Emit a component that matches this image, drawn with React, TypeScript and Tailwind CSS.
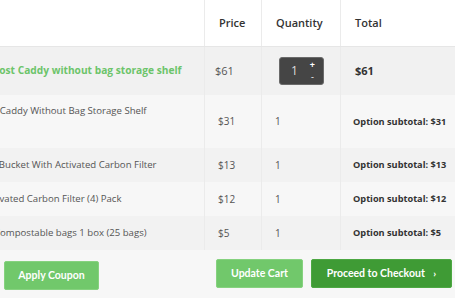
import { ReactNode } from "react";

type Option = {
  name: string;
  offset: string;
  price: string;
  qty: string;
  subtotal: string;
  tall?: boolean;
  bg: string;
};

const options: Option[] = [
  {
    name: "Compost Caddy Without Bag Storage Shelf",
    offset: "-ml-[43px]",
    price: "$31",
    qty: "1",
    subtotal: "Option subtotal: $31",
    tall: true,
    bg: "bg-[#f7f7f7]",
  },
  {
    name: "Compost Bucket With Activated Carbon Filter",
    offset: "-ml-[44px]",
    price: "$13",
    qty: "1",
    subtotal: "Option subtotal: $13",
    bg: "bg-[#f2f2f2]",
  },
  {
    name: "Activated Carbon Filter (4) Pack",
    offset: "-ml-[17px]",
    price: "$12",
    qty: "1",
    subtotal: "Option subtotal: $12",
    bg: "bg-[#f7f7f7]",
  },
  {
    name: "Compostable bags 1 box (25 bags)",
    offset: "-ml-[6px]",
    price: "$5",
    qty: "1",
    subtotal: "Option subtotal: $5",
    bg: "bg-[#f2f2f2]",
  },
];

const Cell = ({ className, children }: { className: string; children?: ReactNode }) => (
  <div className={`flex items-center overflow-hidden border-r border-[#ebebeb] ${className}`}>
    {children}
  </div>
);

const App = () => {
  return (
    <div
      className="w-[455px] h-[298px] overflow-hidden bg-[#f7f7f7] text-[#555]"
      style={{ fontFamily: '"Open Sans", "Liberation Sans", sans-serif' }}
    >
      {/* header */}
      <div className="flex h-[47px] bg-white border-b border-[#e6e6e6] font-semibold text-[11px] text-[#333]">
        <Cell className="w-[205px]" />
        <Cell className="w-[57px] pl-[14px]">Price</Cell>
        <Cell className="w-[79px] pl-[14px]">Quantity</Cell>
        <div className="flex items-center flex-1 pl-[14px]">Total</div>
      </div>

      {/* product row */}
      <div className="flex h-[48px] bg-[#f1f1f1]">
        <Cell className="w-[205px]">
          <span className="-ml-[30px] whitespace-nowrap font-bold text-[10.2px] text-[#6cc46a]">
            Compost Caddy without bag storage shelf
          </span>
        </Cell>
        <Cell className="w-[57px] pl-[10px] text-[11px]">$61</Cell>
        <Cell className="w-[79px] pl-[17px]">
          <div className="relative flex items-center w-[45px] h-[28px] rounded-[3px] bg-[#454545] border border-[#6a6a6a]">
            <span className="pl-[11px] text-[12px] text-[#dddddd]">1</span>
            <span className="absolute right-[8px] top-[1px] text-[9px] leading-[11px] text-white font-bold">+</span>
            <span className="absolute right-[9px] bottom-[2px] text-[9px] leading-[10px] text-white">-</span>
          </div>
        </Cell>
        <div className="flex items-center flex-1 pl-[14px] font-bold text-[11px] text-[#333]">$61</div>
      </div>

      {/* option rows */}
      {options.map((o) => (
        <div key={o.name} className={`flex ${o.tall ? "h-[53px]" : "h-[34px]"} ${o.bg}`}>
          <Cell className={`w-[205px] ${o.tall ? "items-start pt-[9px]" : ""}`}>
            <span className={`${o.offset} whitespace-nowrap text-[9.6px]`}>{o.name}</span>
          </Cell>
          <Cell className="w-[57px] pl-[13px] text-[10px]">{o.price}</Cell>
          <Cell className="w-[79px] pl-[13px] text-[10px]">{o.qty}</Cell>
          <div className="flex items-center flex-1 pl-[12px] whitespace-nowrap font-bold text-[9.2px] text-[#333]">
            {o.subtotal}
          </div>
        </div>
      ))}

      {/* footer buttons */}
      <div
        className="flex items-start pt-[9px] pl-[4px]"
        style={{ fontFamily: "Lato, 'Liberation Sans', sans-serif" }}
      >
        <button className="mt-[2px] w-[95px] h-[29px] rounded-[2px] bg-[#71c86b] border border-[#86d27f] text-white font-bold text-[10.5px]">
          Apply Coupon
        </button>
        <button className="ml-[117px] w-[87px] h-[29px] rounded-[2px] bg-[#71c86b] border border-[#86d27f] text-white font-bold text-[10.5px]">
          Update Cart
        </button>
        <button className="ml-[8px] w-[141px] h-[29px] rounded-[2px] bg-[#3f9b35] border border-[#4da843] text-white font-bold text-[10.5px]">
          Proceed to Checkout <span className="ml-[6px] text-[10px]">›</span>
        </button>
      </div>
    </div>
  );
};

export default App;
